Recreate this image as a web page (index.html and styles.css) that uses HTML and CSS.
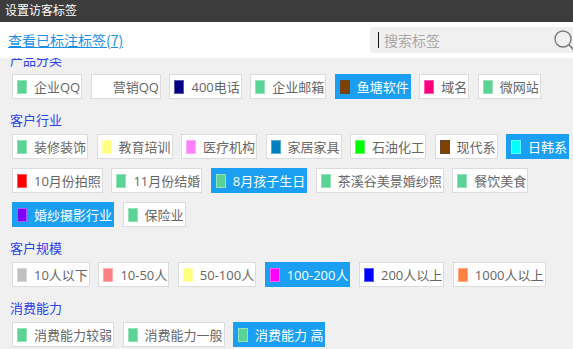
FILE: index.html
```html
<!DOCTYPE html>
<html lang="zh-CN">
<head>
<meta charset="utf-8">
<title>设置访客标签</title>
<link rel="stylesheet" href="styles.css">
</head>
<body>
<div class="dialog">
  <div class="titlebar">设置访客标签</div>
  <div class="toolbar">
    <a class="marked-link" href="#">查看已标注标签(7)</a>
    <div class="search">
      <span class="caret"></span>
      <span class="placeholder">搜索标签</span>
      <svg class="search-icon" width="22" height="24" viewBox="0 0 22 24">
        <circle cx="10" cy="10" r="8" fill="none" stroke="#7a7a7a" stroke-width="1.4"/>
        <line x1="15.8" y1="15.8" x2="22" y2="22" stroke="#7a7a7a" stroke-width="1.6"/>
      </svg>
    </div>
  </div>
  <div class="content">
    <div class="inner">
      <section class="group">
        <h3 class="group-title">产品分类</h3>
        <div class="tags">
          <span class="tag"><i class="sw c-green"></i>企业QQ</span>
          <span class="tag"><i class="sw c-none"></i>营销QQ</span>
          <span class="tag"><i class="sw c-navy"></i>400电话</span>
          <span class="tag"><i class="sw c-green"></i>企业邮箱</span>
          <span class="tag on"><i class="sw c-brown"></i>鱼塘软件</span>
          <span class="tag"><i class="sw c-rose"></i>域名</span>
          <span class="tag"><i class="sw c-green"></i>微网站</span>
        </div>
      </section>
      <section class="group">
        <h3 class="group-title">客户行业</h3>
        <div class="tags">
          <span class="tag"><i class="sw c-green"></i>装修装饰</span>
          <span class="tag"><i class="sw c-lyellow"></i>教育培训</span>
          <span class="tag"><i class="sw c-lpink"></i>医疗机构</span>
          <span class="tag"><i class="sw c-steel"></i>家居家具</span>
          <span class="tag"><i class="sw c-lime"></i>石油化工</span>
          <span class="tag"><i class="sw c-brown"></i>现代系</span>
          <span class="tag on"><i class="sw c-cyan"></i>日韩系</span>
          <span class="tag"><i class="sw c-red"></i>10月份拍照</span>
          <span class="tag"><i class="sw c-green"></i>11月份结婚</span>
          <span class="tag on"><i class="sw c-green"></i>8月孩子生日</span>
          <span class="tag"><i class="sw c-green"></i>茶溪谷美景婚纱照</span>
          <span class="tag"><i class="sw c-green"></i>餐饮美食</span>
          <span class="tag on"><i class="sw c-violet"></i>婚纱摄影行业</span>
          <span class="tag"><i class="sw c-green"></i>保险业</span>
        </div>
      </section>
      <section class="group">
        <h3 class="group-title">客户规模</h3>
        <div class="tags">
          <span class="tag"><i class="sw c-silver"></i>10人以下</span>
          <span class="tag"><i class="sw c-salmon"></i>10-50人</span>
          <span class="tag"><i class="sw c-lyellow"></i>50-100人</span>
          <span class="tag on"><i class="sw c-magenta"></i>100-200人</span>
          <span class="tag"><i class="sw c-blue"></i>200人以上</span>
          <span class="tag"><i class="sw c-orange"></i>1000人以上</span>
        </div>
      </section>
      <section class="group">
        <h3 class="group-title">消费能力</h3>
        <div class="tags">
          <span class="tag"><i class="sw c-green"></i>消费能力较弱</span>
          <span class="tag"><i class="sw c-green"></i>消费能力一般</span>
          <span class="tag on"><i class="sw c-green"></i>消费能力 高</span>
        </div>
      </section>
    </div>
  </div>
</div>
</body>
</html>
```

FILE: styles.css
```css
html, body {
  margin: 0;
  padding: 0;
  background: #f0f0f0;
}
body {
  font-family: "Noto Sans CJK SC", "Noto Sans", sans-serif;
  width: 573px;
  height: 349px;
  overflow: hidden;
}
.dialog {
  display: flex;
  flex-direction: column;
  height: 349px;
}
.titlebar {
  height: 22px;
  line-height: 20px;
  background: #3c3c3c;
  color: #ffffff;
  font-size: 12px;
  padding-left: 5px;
  flex: none;
}
.toolbar {
  height: 36px;
  background: #ffffff;
  display: flex;
  align-items: center;
  justify-content: space-between;
  flex: none;
}
.marked-link {
  margin-left: 8px;
  font-size: 14px;
  color: #1a8fe6;
  text-decoration: underline;
  line-height: 20px;
}
.search {
  width: 203px;
  height: 26px;
  background: #f0f0f0;
  display: flex;
  align-items: center;
  position: relative;
}
.caret {
  width: 1px;
  height: 16px;
  background: #111;
  margin-left: 8px;
}
.placeholder {
  margin-left: 5px;
  color: #a8a8a8;
  font-size: 14px;
}
.search-icon {
  position: absolute;
  left: 183px;
  top: 2px;
}
.content {
  flex: 1;
  overflow: hidden;
}
.inner {
  margin-top: -19px;
  padding-left: 12px;
}
.group {
  padding-top: 11px;
}
.group-title {
  margin: 0 0 4px -2px;
  font-size: 13px;
  font-weight: normal;
  line-height: 20px;
  color: #2c42ee;
}
.tags {
  display: flex;
  flex-wrap: wrap;
  gap: 9px 8.5px;
}
.tag {
  box-sizing: border-box;
  height: 25px;
  display: inline-flex;
  align-items: center;
  border: 1px solid #dcdcdc;
  background: #ffffff;
  padding: 0 1px 0 4px;
  font-family: "Open Sans", "Noto Sans CJK SC", sans-serif;
  font-size: 13px;
  color: #666666;
  white-space: nowrap;
}
.tag.on {
  background: #1a9ff2;
  border-color: #1a9ff2;
  color: #ffffff;
}
.sw {
  display: block;
  width: 10px;
  height: 14px;
  margin-right: 7px;
  box-sizing: border-box;
  border: 1px solid rgba(255,255,255,0.35);
}
.c-green { background: #5bd296; }
.c-none { background: #ffffff; border-color: #ffffff; }
.c-navy { background: #000080; }
.c-brown { background: #804000; border-color: rgba(80,80,80,0.5); }
.c-rose { background: #ff0080; }
.c-lyellow { background: #ffff80; }
.c-lpink { background: #ff80ff; }
.c-steel { background: #0080c0; }
.c-lime { background: #00ff00; }
.c-cyan { background: #00ffff; }
.c-red { background: #ff0000; }
.c-violet { background: #8000ff; }
.c-silver { background: #c0c0c0; }
.c-salmon { background: #ff8080; }
.c-magenta { background: #ff00ff; }
.c-blue { background: #0000ff; }
.c-orange { background: #ff8040; }
```
